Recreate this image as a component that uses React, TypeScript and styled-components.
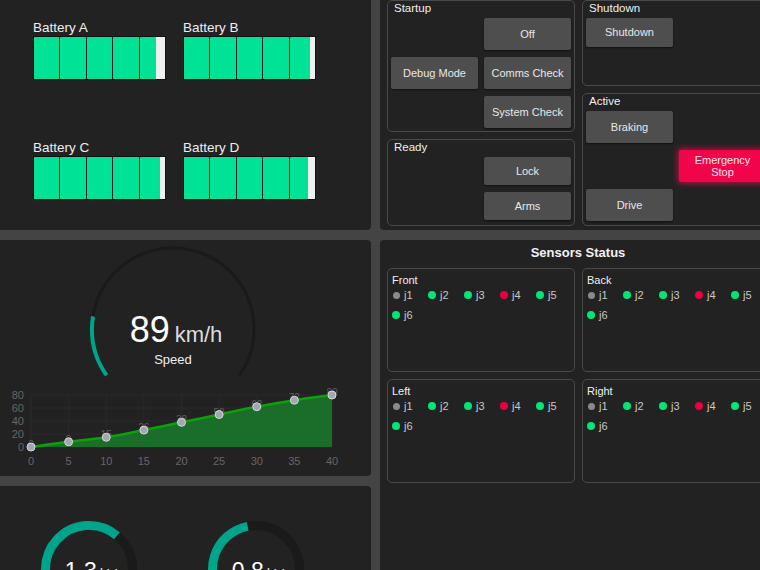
import React from "react";
import styled, { createGlobalStyle } from "styled-components";

const GlobalStyle = createGlobalStyle`
  html, body { margin: 0; padding: 0; background: #444; overflow: hidden; }
  body { font-family: "Liberation Sans", Arial, sans-serif; color: #eee; }
  #root { width: 760px; height: 570px; overflow: hidden; }
`;

const GREEN = "#00e396";
const TEAL = "#00a48a";
const TRACK = "#1a1a1a";

const Dashboard = styled.div`
  display: grid;
  grid-template-columns: 381px 396px;
  grid-template-rows: 237px 236px 240px;
  column-gap: 9px;
  row-gap: 10px;
  margin: -7px 0 0 -10px;
  width: max-content;
`;

const Panel = styled.section`
  background: #222;
  border-radius: 4px;
  box-sizing: border-box;
  position: relative;
  overflow: hidden;
`;

/* ---------- Batteries ---------- */
const BatteryPanel = styled(Panel)`
  display: grid;
  grid-template-columns: 133px 133px;
  grid-auto-rows: 60px;
  column-gap: 17px;
  row-gap: 60px;
  align-content: start;
  padding: 27px 0 0 43px;
`;

const BatteryLabel = styled.div`
  font-size: 13.5px;
  line-height: 16px;
  color: #eee;
`;

const Bar = styled.div`
  display: flex;
  gap: 1px;
  height: 44px;
  box-sizing: border-box;
  border: 1px solid #111;
  background: #1c1c1c;
`;

const Cell = styled.div<{ $fill: number }>`
  flex: 1;
  background: linear-gradient(
    to right,
    ${GREEN} ${(p) => p.$fill}%,
    #f0f0f0 ${(p) => p.$fill}%
  );
`;

const batteries = [
  { name: "Battery A", last: 62 },
  { name: "Battery B", last: 80 },
  { name: "Battery C", last: 80 },
  { name: "Battery D", last: 72 },
];

/* ---------- Controls ---------- */
const ControlsPanel = styled(Panel)`
  display: grid;
  grid-template-columns: 188px 1fr;
  column-gap: 7px;
  padding: 7px 7px 4px 7px;
`;

const GroupColumn = styled.div`
  display: flex;
  flex-direction: column;
  gap: 7px;
`;

const Group = styled.div<{ $h: number }>`
  height: ${(p) => p.$h}px;
  box-sizing: border-box;
  border: 1px solid #4a4a4a;
  border-radius: 5px;
  padding: 0 3px 3px;
`;

const GroupTitle = styled.div`
  font-size: 11.5px;
  line-height: 15px;
  margin-bottom: 2px;
  padding-left: 3px;
  color: #f0f0f0;
`;

const ButtonGrid = styled.div<{ $cols: number; $rowH: number }>`
  display: grid;
  grid-template-columns: repeat(${(p) => p.$cols}, 87px);
  grid-auto-rows: ${(p) => p.$rowH}px;
  gap: 7px 6px;
`;

const Btn = styled.button<{ $col: number; $row: number; $danger?: boolean }>`
  grid-column: ${(p) => p.$col};
  grid-row: ${(p) => p.$row};
  border: none;
  border-radius: 2px;
  padding: 0 2px;
  font-family: "Liberation Sans", Arial, sans-serif;
  font-size: 11px;
  line-height: 12.5px;
  color: ${(p) => (p.$danger ? "#fde8ee" : "#e8e8e8")};
  background: ${(p) => (p.$danger ? "#f2044b" : "#4e4e4e")};
  box-shadow: ${(p) =>
    p.$danger
      ? "0 0 6px 1px rgba(255, 10, 80, 0.75)"
      : "0 1px 2px rgba(0, 0, 0, 0.55)"};
`;

/* ---------- Speed ---------- */
const SpeedPanel = styled(Panel)`
  display: flex;
  flex-direction: column;
  padding-top: 4px;
`;

const GaugeWrap = styled.div`
  position: relative;
  width: 170px;
  height: 142px;
  margin-left: 98px;
`;

const Readout = styled.div`
  position: absolute;
  left: 0;
  right: 0;
  top: 68px;
  display: flex;
  flex-direction: column;
  align-items: center;
`;

const ValueRow = styled.div`
  display: flex;
  align-items: baseline;
  gap: 5px;
  padding-left: 6px;
`;

const BigValue = styled.span`
  font-size: 36px;
  line-height: 36px;
  color: #fff;
`;

const BigUnit = styled.span`
  font-size: 22px;
  line-height: 22px;
  color: #ddd;
`;

const GaugeCaption = styled.div`
  margin-top: 4px;
  font-size: 13px;
  line-height: 15px;
  color: #eee;
`;

const ChartSvg = styled.svg`
  display: block;
  margin-left: 10px;
  font-family: "Liberation Sans", Arial, sans-serif;
`;

/* ---------- Rings ---------- */
const RingsPanel = styled(Panel)`
  display: flex;
  align-items: flex-start;
  gap: 67px;
  padding: 33px 0 0 49px;
`;

const RingWrap = styled.div`
  position: relative;
  width: 100px;
  height: 100px;
`;

const RingReadout = styled.div`
  position: absolute;
  left: 0;
  right: 0;
  top: 41px;
  display: flex;
  justify-content: center;
  align-items: baseline;
  gap: 3px;
  padding-left: 4px;
`;

const RingValue = styled.span`
  font-size: 23px;
  line-height: 23px;
  color: #fff;
`;

const RingUnit = styled.span`
  font-size: 15px;
  line-height: 15px;
  color: #ddd;
`;

/* ---------- Sensors ---------- */
const SensorsPanel = styled(Panel)`
  grid-row: span 2;
  padding: 5px 7px 0;
`;

const SensorsTitle = styled.h2`
  margin: 0 0 7px;
  font-size: 13px;
  line-height: 16px;
  font-weight: bold;
  text-align: center;
  color: #f2f2f2;
`;

const SensorGrid = styled.div`
  display: grid;
  grid-template-columns: 188px 188px;
  grid-auto-rows: 104px;
  gap: 7px;
`;

const SensorBox = styled.div`
  box-sizing: border-box;
  border: 1px solid #4a4a4a;
  border-radius: 5px;
  padding: 4px 0 0 4px;
`;

const SensorName = styled.div`
  font-size: 11px;
  line-height: 14px;
  color: #f0f0f0;
`;

const SensorList = styled.div`
  display: flex;
  flex-wrap: wrap;
  row-gap: 4px;
`;

const Sensor = styled.div`
  width: 36px;
  height: 16px;
  display: flex;
  align-items: center;
  gap: 4px;
  font-size: 11px;
  color: #c8c8c8;
`;

const DotSlot = styled.span`
  width: 8px;
  display: flex;
  justify-content: center;
`;

const Dot = styled.span<{ $c: string; $size: number }>`
  width: ${(p) => p.$size}px;
  height: ${(p) => p.$size}px;
  border-radius: 50%;
  background: ${(p) => p.$c};
`;

const sensorStates: { id: string; color: string; size: number }[] = [
  { id: "j1", color: "#8a8a8a", size: 7 },
  { id: "j2", color: "#00e676", size: 8 },
  { id: "j3", color: "#00e676", size: 8 },
  { id: "j4", color: "#ea003f", size: 8 },
  { id: "j5", color: "#00e676", size: 8 },
  { id: "j6", color: "#00e676", size: 8 },
];

/* ---------- helpers ---------- */
function arcPath(cx: number, cy: number, r: number, a0: number, a1: number) {
  const pt = (a: number) => [
    cx + r * Math.sin((a * Math.PI) / 180),
    cy - r * Math.cos((a * Math.PI) / 180),
  ];
  const [x0, y0] = pt(a0);
  const [x1, y1] = pt(a1);
  const large = a1 - a0 > 180 ? 1 : 0;
  return `M${x0.toFixed(2)} ${y0.toFixed(2)} A${r} ${r} 0 ${large} 1 ${x1.toFixed(2)} ${y1.toFixed(2)}`;
}

const chartData = [0, 8, 15, 26, 38, 50, 62, 72, 80];
const cx = (i: number) => 31 + i * 5 * 7.525;
const cy = (v: number) => 61 - v * 0.65;

function smoothPath(pts: [number, number][]) {
  let d = `M${pts[0][0]} ${pts[0][1]}`;
  for (let i = 0; i < pts.length - 1; i++) {
    const p0 = pts[i - 1] || pts[i];
    const p1 = pts[i];
    const p2 = pts[i + 1];
    const p3 = pts[i + 2] || p2;
    const t = 0.18;
    const c1x = p1[0] + (p2[0] - p0[0]) * t;
    const c1y = p1[1] + (p2[1] - p0[1]) * t;
    const c2x = p2[0] - (p3[0] - p1[0]) * t;
    const c2y = p2[1] - (p3[1] - p1[1]) * t;
    d += ` C${c1x.toFixed(2)} ${c1y.toFixed(2)} ${c2x.toFixed(2)} ${c2y.toFixed(2)} ${p2[0].toFixed(2)} ${p2[1].toFixed(2)}`;
  }
  return d;
}

const SpeedChart: React.FC = () => {
  const pts = chartData.map((v, i) => [cx(i), cy(v)] as [number, number]);
  const line = smoothPath(pts);
  const area = `${line} L${cx(8)} 61 L${cx(0)} 61 Z`;
  const yTicks = [80, 60, 40, 20, 0];
  return (
    <ChartSvg width={350} height={90} viewBox="0 0 350 90">
      {yTicks.map((v) => (
        <line key={`h${v}`} x1={31} x2={332} y1={cy(v)} y2={cy(v)} stroke="#2a2a2a" strokeWidth={1} />
      ))}
      {chartData.map((_, i) => (
        <line key={`v${i}`} x1={cx(i)} x2={cx(i)} y1={cy(80)} y2={61} stroke="#2a2a2a" strokeWidth={1} />
      ))}
      {yTicks.map((v) => (
        <text key={`yl${v}`} x={24} y={cy(v) + 4} fontSize={11} fill="#666" textAnchor="end">
          {v}
        </text>
      ))}
      {chartData.map((_, i) => (
        <text key={`xl${i}`} x={cx(i)} y={79} fontSize={11} fill="#666" textAnchor="middle">
          {i * 5}
        </text>
      ))}
      <path d={area} fill="#1b6e2a" />
      <path d={line} fill="none" stroke="#0ba10b" strokeWidth={2.5} />
      {pts.map(([x, y], i) => (
        <text key={`dl${i}`} x={x} y={y + 1} fontSize={10} fill="#5e5e5e" textAnchor="middle">
          {chartData[i]}
        </text>
      ))}
      {pts.map(([x, y], i) => (
        <circle key={`m${i}`} cx={x} cy={y} r={4} fill="#a3a7b4" stroke="#d8d8d8" strokeWidth={1} />
      ))}
    </ChartSvg>
  );
};

const Ring: React.FC<{ value: string; unit: string; end: number }> = ({ value, unit, end }) => (
  <RingWrap>
    <svg width={100} height={100} viewBox="0 0 100 100">
      <path d={arcPath(50, 50, 43.5, -135, 135)} fill="none" stroke={TRACK} strokeWidth={9} />
      <path d={arcPath(50, 50, 43.5, -135, end)} fill="none" stroke={TEAL} strokeWidth={9} />
    </svg>
    <RingReadout>
      <RingValue>{value}</RingValue>
      <RingUnit>{unit}</RingUnit>
    </RingReadout>
  </RingWrap>
);

const sensorGroups = ["Front", "Back", "Left", "Right"];

export default function App() {
  return (
    <>
      <GlobalStyle />
      <Dashboard>
        <BatteryPanel>
          {batteries.map((b) => (
            <div key={b.name}>
              <BatteryLabel>{b.name}</BatteryLabel>
              <Bar>
                {[100, 100, 100, 100, b.last].map((f, i) => (
                  <Cell key={i} $fill={f} />
                ))}
              </Bar>
            </div>
          ))}
        </BatteryPanel>

        <ControlsPanel>
          <GroupColumn>
            <Group $h={132}>
              <GroupTitle>Startup</GroupTitle>
              <ButtonGrid $cols={2} $rowH={32}>
                <Btn $col={2} $row={1}>Off</Btn>
                <Btn $col={1} $row={2}>Debug Mode</Btn>
                <Btn $col={2} $row={2}>Comms Check</Btn>
                <Btn $col={2} $row={3}>System Check</Btn>
              </ButtonGrid>
            </Group>
            <Group $h={87}>
              <GroupTitle>Ready</GroupTitle>
              <ButtonGrid $cols={2} $rowH={28}>
                <Btn $col={2} $row={1}>Lock</Btn>
                <Btn $col={2} $row={2}>Arms</Btn>
              </ButtonGrid>
            </Group>
          </GroupColumn>
          <GroupColumn>
            <Group $h={86}>
              <GroupTitle>Shutdown</GroupTitle>
              <ButtonGrid $cols={2} $rowH={29}>
                <Btn $col={1} $row={1}>Shutdown</Btn>
              </ButtonGrid>
            </Group>
            <Group $h={133}>
              <GroupTitle>Active</GroupTitle>
              <ButtonGrid $cols={2} $rowH={32}>
                <Btn $col={1} $row={1}>Braking</Btn>
                <Btn $col={2} $row={2} $danger>
                  Emergency
                  <br />
                  Stop
                </Btn>
                <Btn $col={1} $row={3}>Drive</Btn>
              </ButtonGrid>
            </Group>
          </GroupColumn>
        </ControlsPanel>

        <SpeedPanel>
          <GaugeWrap>
            <svg width={170} height={142} viewBox="0 0 170 142">
              <path d={arcPath(85, 85, 81, -125, 125)} fill="none" stroke={TRACK} strokeWidth={3} />
              <path d={arcPath(85, 85, 81, -125, -81)} fill="none" stroke={TEAL} strokeWidth={4} />
            </svg>
            <Readout>
              <ValueRow>
                <BigValue>89</BigValue>
                <BigUnit>km/h</BigUnit>
              </ValueRow>
              <GaugeCaption>Speed</GaugeCaption>
            </Readout>
          </GaugeWrap>
          <SpeedChart />
        </SpeedPanel>

        <SensorsPanel>
          <SensorsTitle>Sensors Status</SensorsTitle>
          <SensorGrid>
            {sensorGroups.map((g) => (
              <SensorBox key={g}>
                <SensorName>{g}</SensorName>
                <SensorList>
                  {sensorStates.map((s) => (
                    <Sensor key={s.id}>
                      <DotSlot>
                        <Dot $c={s.color} $size={s.size} />
                      </DotSlot>
                      {s.id}
                    </Sensor>
                  ))}
                </SensorList>
              </SensorBox>
            ))}
          </SensorGrid>
        </SensorsPanel>

        <RingsPanel>
          <Ring value="1.3" unit="kV" end={40} />
          <Ring value="0.8" unit="kV" end={-11} />
        </RingsPanel>
      </Dashboard>
    </>
  );
}
